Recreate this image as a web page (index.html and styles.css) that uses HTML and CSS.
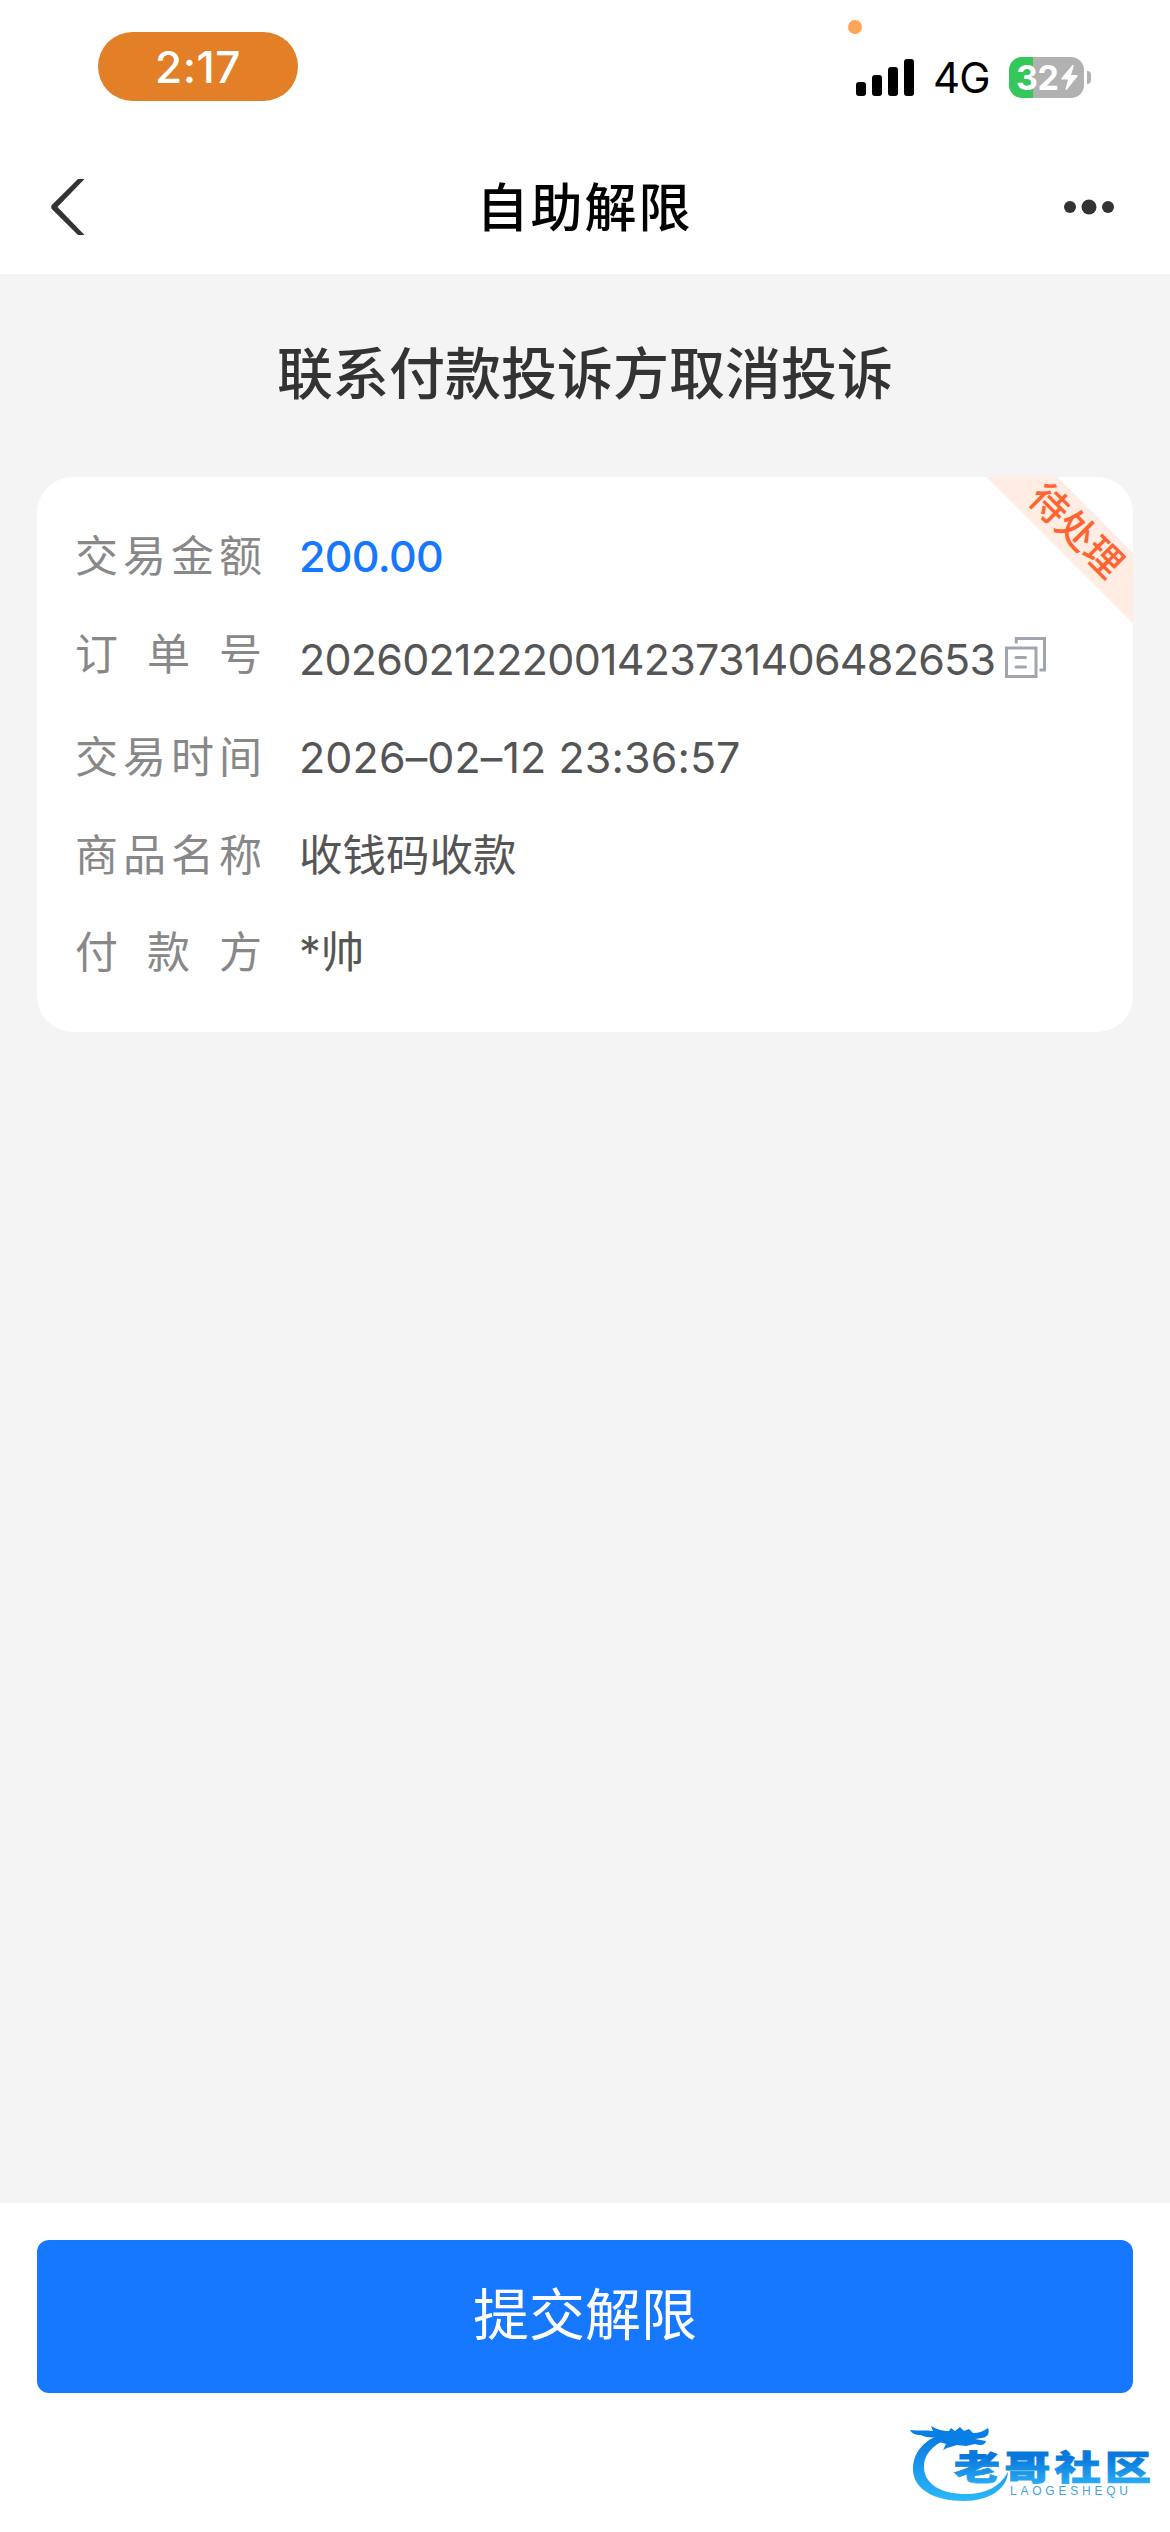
FILE: index.html
```html
<!DOCTYPE html>
<html lang="zh-CN">
<head>
    <meta charset="UTF-8">
    <meta name="viewport" content="width=device-width, initial-scale=1.0">
    <title>自助解限</title>
    <link rel="stylesheet" href="styles.css">
</head>
<body>
    <div class="container">
        <div class="statusBar">
            <div class="time">2:17</div>
            <div class="statusRight">
                <span class="micDot"></span>
                <svg class="signal" width="58" height="37" viewBox="0 0 58 37">
                    <rect x="0" y="23" width="10" height="14" rx="3"/>
                    <rect x="16" y="16" width="10" height="21" rx="3"/>
                    <rect x="32" y="8" width="10" height="29" rx="3"/>
                    <rect x="48" y="0" width="10" height="37" rx="3"/>
                </svg>
                <span class="network">4G</span>
                <div class="battery">
                    <span class="batteryLevel">32</span>
                    <svg width="17" height="25" viewBox="0 0 17 25">
                        <path d="M11.5 0 L0.5 13 Q0 14.5 1.5 14.5 H7 L4.5 24 Q5 25.5 6 24.5 L16.5 11.5 Q17 10 15.5 10 H10 L12.8 1 Q12.5 -0.5 11.5 0Z" fill="#fff"/>
                    </svg>
                </div>
                <span class="batteryCap"></span>
            </div>
        </div>
        <header>
            <svg class="backIcon" width="34" height="56" viewBox="0 0 34 56">
                <path d="M27 0 H33.5 L6.5 28 L33.5 56 H27 L0.8 30 Q-0.5 28 0.8 26Z" fill="#333"/>
            </svg>
            <h1>自助解限</h1>
            <svg class="moreIcon" width="50" height="16" viewBox="0 0 50 16">
                <circle cx="6" cy="8" r="6"/>
                <circle cx="25" cy="8" r="7.5"/>
                <circle cx="44" cy="8" r="6"/>
            </svg>
        </header>
        <div class="content">
            <h2>联系付款投诉方取消投诉</h2>
            <div class="card">
                <div class="ribbon">待处理</div>
                <div class="row">
                    <div class="label"><span>交</span><span>易</span><span>金</span><span>额</span></div>
                    <div class="value amount">200.00</div>
                </div>
                <div class="row orderRow">
                    <div class="label"><span>订</span><span>单</span><span>号</span></div>
                    <div class="value orderNumber">2026021222001423731406482653</div>
                    <svg class="copyIcon" width="41" height="41" viewBox="0 0 41 41">
                        <path d="M11.3 6.5 V1.5 H39.5 V33 H34.5"/>
                        <rect x="1.5" y="11" width="29.5" height="28.5"/>
                        <path d="M11 20.5 H20.5 M11 30 H20.5" stroke-linecap="round"/>
                    </svg>
                </div>
                <div class="row">
                    <div class="label"><span>交</span><span>易</span><span>时</span><span>间</span></div>
                    <div class="value date">2026–02–12 23:36:57</div>
                </div>
                <div class="row">
                    <div class="label"><span>商</span><span>品</span><span>名</span><span>称</span></div>
                    <div class="value">收钱码收款</div>
                </div>
                <div class="row">
                    <div class="label"><span>付</span><span>款</span><span>方</span></div>
                    <div class="value">*帅</div>
                </div>
            </div>
        </div>
        <footer>
            <button class="submitButton">提交解限</button>
        </footer>
        <svg class="watermark" width="250" height="90" viewBox="0 0 250 90">
            <defs>
                <linearGradient id="ringBlue" x1="0" y1="0" x2="0" y2="1">
                    <stop offset="0" stop-color="#0878e0"/>
                    <stop offset="1" stop-color="#2cb8fa"/>
                </linearGradient>
                <linearGradient id="textBlue" x1="0" y1="0" x2="0" y2="1">
                    <stop offset="0.25" stop-color="#0878dc"/>
                    <stop offset="1" stop-color="#30b4f8"/>
                </linearGradient>
            </defs>
            <path d="M36 15 C18 18 4 32 4 50 C4 70 25 82 55 82 C80 82 98 70 99 53 C91 68 76 75 57 75 C32 75 15 65 15 48 C15 34 26 24 42 19Z" fill="url(#ringBlue)"/>
            <path d="M1 11 C10 12 16 11 24 12 L22 7 C29 11 34 12 40 12 L42 9 L46 12 L51 8 L55 12 L60 10 L64 14 C70 14 75 12 79 9 C81 14 79 18 73 19 L66 20 L77 22 C76 26 72 27 66 25 L57 27 L48 26 L38 29 L34 31 L37 25 L27 22 L32 18 C21 19 15 18 12 16 C7 16 3 15 1 11Z" fill="#087fe6"/>
            <text class="logoName" transform="scale(1.36 1)" x="33" y="61" textLength="145" lengthAdjust="spacing" fill="url(#textBlue)" stroke="url(#textBlue)">老哥社区</text>
            <text class="logoLatin" x="101" y="76" textLength="118" fill="#48a0e4">LAOGESHEQU</text>
        </svg>
    </div>
</body>
</html>
```
FILE: styles.css
```css
* {
    box-sizing: border-box;
}

body {
    margin: 0;
    font-family: Inter, "Noto Sans CJK SC", sans-serif;
    background-color: #fff;
}

svg {
    display: block;
    flex-shrink: 0;
}

h1, h2 {
    margin: 0;
    font-weight: 500;
}

.container {
    position: relative;
    display: flex;
    flex-direction: column;
    width: 1170px;
    height: 2532px;
    overflow: hidden;
}

.statusBar {
    display: flex;
    justify-content: space-between;
    height: 140px;
    padding: 32px 79px 0 98px;
}

.time {
    width: 200px;
    height: 69px;
    line-height: 70px;
    text-align: center;
    color: #fff;
    font-size: 44px;
    font-weight: 500;
    letter-spacing: 0.5px;
    background-color: #e27f27;
    border-radius: 35px;
}

.statusRight {
    position: relative;
    display: flex;
    align-items: center;
    height: 91px;
}

.micDot {
    position: absolute;
    left: -8px;
    top: -12px;
    width: 14px;
    height: 14px;
    border-radius: 50%;
    background-color: #ffa456;
}

.network {
    width: 76px;
    margin-left: 19px;
    font-size: 42px;
    line-height: 42px;
    letter-spacing: -1px;
}

.battery {
    display: flex;
    align-items: center;
    width: 75px;
    height: 41px;
    padding-left: 7px;
    border-radius: 13px;
    background: linear-gradient(90deg, #35c759 24px, #b1b1b1 24px);
}

.batteryLevel {
    width: 45px;
    color: #fff;
    font-size: 34px;
    line-height: 41px;
    font-weight: 700;
    letter-spacing: -0.5px;
}

.batteryCap {
    width: 4px;
    height: 13px;
    margin-left: 3px;
    border-radius: 0 4px 4px 0;
    background-color: #b1b1b1;
}

header {
    display: flex;
    align-items: center;
    justify-content: space-between;
    height: 134px;
    padding: 0 56px 0 51px;
}

header h1 {
    padding-top: 4px;
    font-size: 52px;
    line-height: 76px;
    letter-spacing: 2px;
}

.backIcon {
    margin-right: 20px;
}

.moreIcon {
    fill: #333;
}

.content {
    flex: 1;
    padding: 60px 37px 0;
    background-color: #f4f4f4;
}

.content h2 {
    margin-bottom: 63px;
    text-align: center;
    font-size: 56px;
    line-height: 80px;
    color: #333;
}

.card {
    position: relative;
    height: 555px;
    padding: 46px 38px 0;
    overflow: hidden;
    background-color: #fff;
    border-radius: 36px;
}

.row {
    display: flex;
    height: 66px;
    margin-bottom: 31.5px;
    font-size: 43.5px;
    line-height: 66px;
}

.orderRow {
    height: 72px;
}

.label {
    display: flex;
    justify-content: space-between;
    width: 187px;
    margin-right: 37px;
    color: #888;
    font-size: 43px;
}

.value {
    color: #555;
    white-space: nowrap;
}

.amount {
    color: #1677ff;
    font-size: 43px;
    font-weight: 500;
    letter-spacing: -0.7px;
}

.orderNumber {
    padding-top: 5px;
    font-size: 43px;
    letter-spacing: -0.75px;
}

.date {
    font-size: 43px;
    letter-spacing: 0.1px;
}

.copyIcon {
    margin: 16px 0 0 10px;
    fill: none;
    stroke: #a0a5b0;
    stroke-width: 3;
}

/* corner status strip, cut off by the card */
.ribbon {
    position: absolute;
    top: 29px;
    right: -93px;
    width: 300px;
    height: 50px;
    line-height: 48px;
    text-align: center;
    font-size: 38px;
    font-weight: 500;
    color: #ff6430;
    background-color: #ffece3;
    transform: rotate(45deg);
}

footer {
    height: 329px;
    padding: 37px 37px 0;
    background-color: #fff;
}

.submitButton {
    display: block;
    width: 100%;
    height: 153px;
    padding: 0 0 12px;
    border: none;
    border-radius: 12px;
    background-color: #1677ff;
    color: #fff;
    font-family: inherit;
    font-size: 56px;
}

.watermark {
    position: absolute;
    left: 909px;
    top: 2419px;
}

.logoName {
    font-size: 34px;
    font-weight: 900;
    stroke-width: 0.8px;
}

.logoLatin {
    font-family: "Liberation Sans", sans-serif;
    font-size: 12px;
}
```
